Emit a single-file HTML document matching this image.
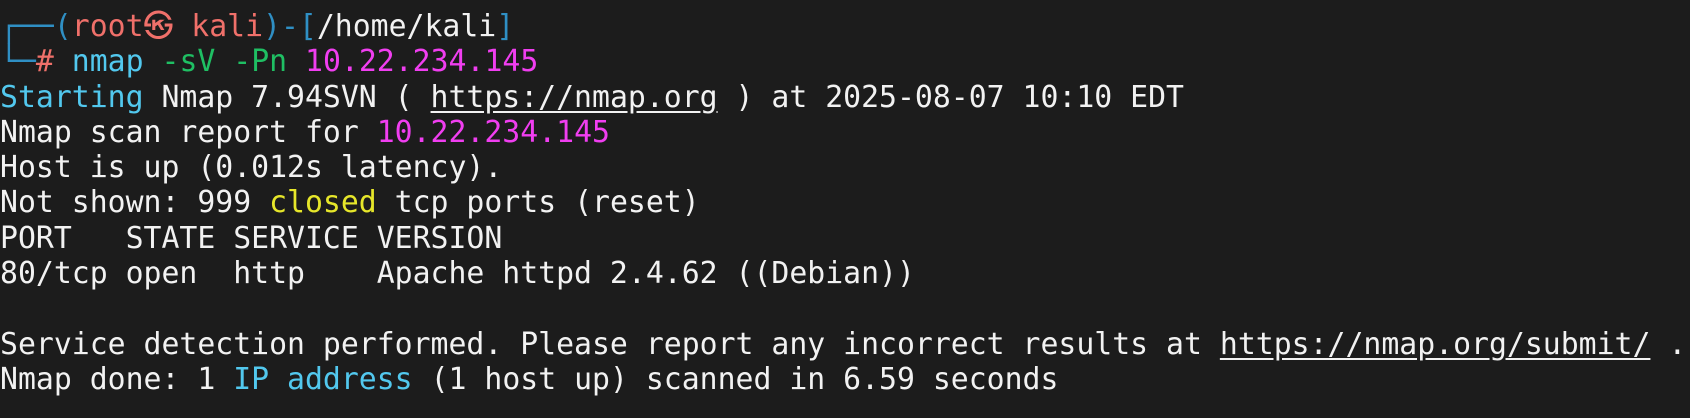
<!DOCTYPE html>
<html><head><meta charset="utf-8"><style>
html,body{margin:0;padding:0;background:#1c1c1c;width:1690px;height:418px;overflow:hidden}
pre{margin:0;padding:9px 0 0 0;font-family:"DejaVu Sans Mono","Liberation Mono",monospace;font-size:29.8px;line-height:35.3px;color:#f2f2f2;white-space:pre}
.b{color:#2f8fc4}.r{color:#f0706a}.c{color:#52c8ee}.g{color:#1fbf63}.m{color:#f03ef0}.y{color:#e6e62a}
u{text-decoration:underline;text-underline-offset:4px}
</style></head><body><pre><span class="b">┌──(</span><span class="r">root㉿ kali</span><span class="b">)-[</span>/home/kali<span class="b">]</span>
<span class="b">└─</span><span class="r">#</span> <span class="c">nmap</span> <span class="g">-sV -Pn</span> <span class="m">10.22.234.145</span>
<span class="c">Starting</span> Nmap 7.94SVN ( <u>https://nmap.org</u> ) at 2025-08-07 10:10 EDT
Nmap scan report for <span class="m">10.22.234.145</span>
Host is up (0.012s latency).
Not shown: 999 <span class="y">closed</span> tcp ports (reset)
PORT   STATE SERVICE VERSION
80/tcp open  http    Apache httpd 2.4.62 ((Debian))

Service detection performed. Please report any incorrect results at <u>https://nmap.org/submit/</u> .
Nmap done: 1 <span class="c">IP address</span> (1 host up) scanned in 6.59 seconds
</pre></body></html>
